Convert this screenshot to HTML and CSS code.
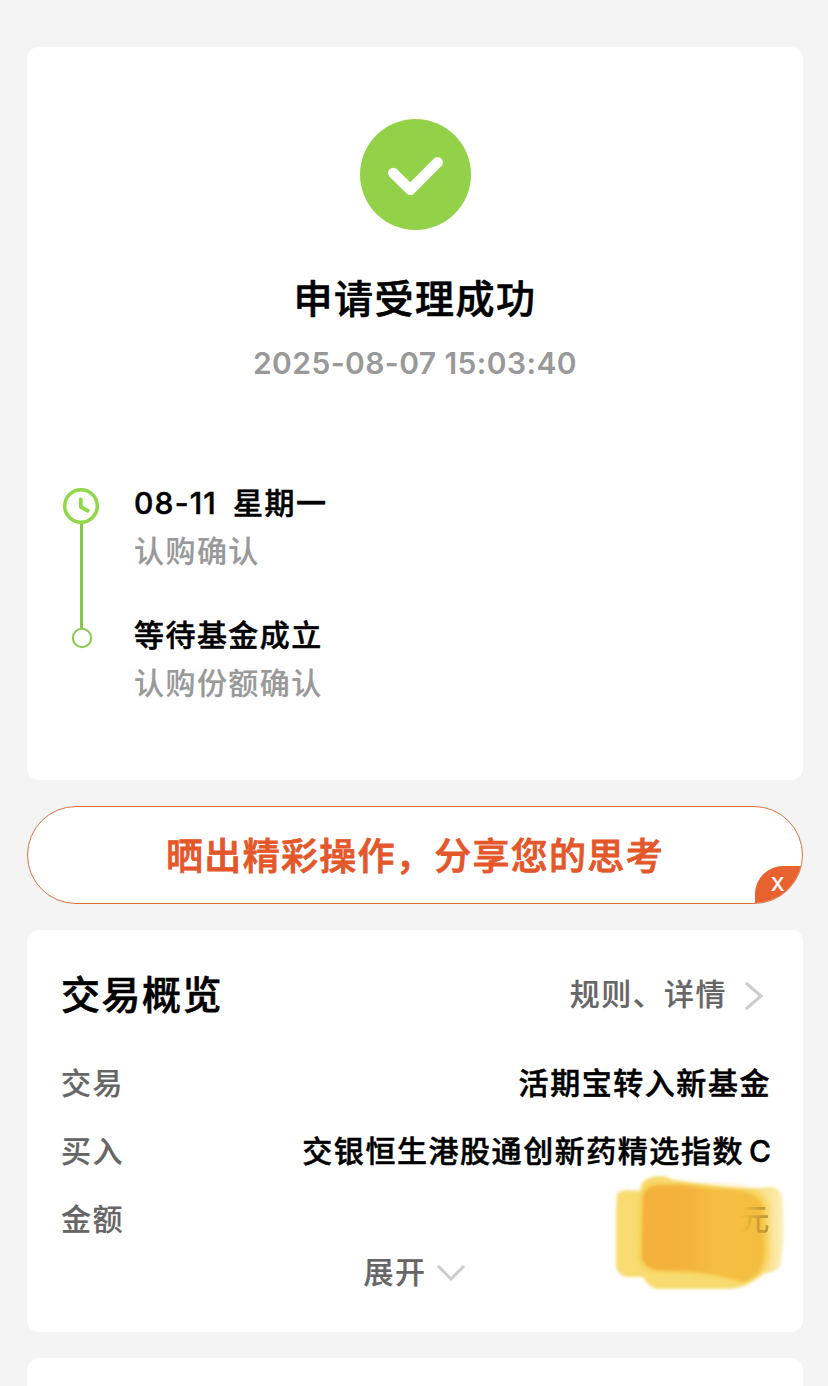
FILE: index.html
```
<!DOCTYPE html>
<html lang="zh-CN">

<head>
    <meta charset="UTF-8">
    <meta name="viewport" content="width=device-width, initial-scale=1.0">
    <title>申请受理成功</title>
    <link rel="stylesheet" href="styles.css">
</head>

<body>
    <div class="page">
        <div class="card result">
            <svg class="result-icon" viewBox="0 0 111 111">
                <circle cx="55.5" cy="55.5" r="55.5" fill="#92d148"/>
                <path d="M33.3 54 L50.3 70.8 L77.7 43.3" fill="none" stroke="#fff" stroke-width="10.5" stroke-linecap="round" stroke-linejoin="round"/>
            </svg>
            <h1 class="result-title">申请受理成功</h1>
            <div class="result-time">2025-08-07 15:03:40</div>

            <div class="timeline">
                <svg class="timeline-line" viewBox="0 0 40 164">
                    <path d="M19.5 36 V142" stroke="#85c550" stroke-width="3"/>
                    <circle cx="19" cy="19" r="16.3" fill="#fff" stroke="#92d64a" stroke-width="3.5"/>
                    <path d="M18.8 12.5 V20 L25.8 23.7" fill="none" stroke="#92d64a" stroke-width="3.8" stroke-linecap="round" stroke-linejoin="round"/>
                    <circle cx="20" cy="151" r="9.2" fill="#fff" stroke="#89ca52" stroke-width="2"/>
                </svg>
                <div class="steps">
                    <div class="step">
                        <div class="step-title"><span class="step-date">08-11</span>星期一</div>
                        <div class="step-desc">认购确认</div>
                    </div>
                    <div class="step">
                        <div class="step-title">等待基金成立</div>
                        <div class="step-desc">认购份额确认</div>
                    </div>
                </div>
            </div>
        </div>

        <div class="share">
            <span class="share-text">晒出精彩操作，分享您的思考</span>
            <span class="share-close">X</span>
        </div>

        <div class="card overview">
            <div class="overview-head">
                <h2 class="overview-title">交易概览</h2>
                <div class="overview-link">
                    <span>规则、详情</span>
                    <svg class="arrow-right" viewBox="0 0 20 30">
                        <path d="M2 2 L17 15 L2 28" fill="none" stroke="#ccc" stroke-width="3"/>
                    </svg>
                </div>
            </div>
            <div class="row">
                <span class="label">交易</span>
                <span class="value">活期宝转入新基金</span>
            </div>
            <div class="row">
                <span class="label">买入</span>
                <span class="value">交银恒生港股通创新药精选指数<span class="share-class">C</span></span>
            </div>
            <div class="row">
                <span class="label">金额</span>
                <span class="value amount">
                    <svg class="marker" viewBox="0 0 180 120">
                        <defs>
                            <filter id="soft" x="-10%" y="-10%" width="120%" height="120%">
                                <feGaussianBlur stdDeviation="1.8"/>
                            </filter>
                            <filter id="softer" x="-15%" y="-15%" width="130%" height="130%">
                                <feGaussianBlur stdDeviation="3"/>
                            </filter>
                            <linearGradient id="ink" x1="0" x2="1" y1="0" y2="0">
                                <stop offset="0" stop-color="#f4b03b"/>
                                <stop offset="0.38" stop-color="#f4b33e"/>
                                <stop offset="0.6" stop-color="#f5bd43"/>
                                <stop offset="1" stop-color="#f3be3f"/>
                            </linearGradient>
                            <linearGradient id="edge" x1="0" x2="1" y1="0" y2="0">
                                <stop offset="0.3" stop-color="#f8dc72"/>
                                <stop offset="0.75" stop-color="#fae394"/>
                                <stop offset="1" stop-color="#fdf0c0"/>
                            </linearGradient>
                        </defs>
                        <path d="M120 18 L166 15 Q176 17 176 32 L177 62 L174 92 Q171 100 160 101 L120 104 Z" fill="url(#edge)" filter="url(#soft)"/>
                        <path d="M10 22 Q14 18 20 18 L34 19 L35 11 Q40 5 52 4 Q60 4 66 8 L100 13 L126 17 L150 60 L156 100 Q140 117 120 117 L50 117 Q41 115 36 105 L20 105 Q10 103 9 94 L9 70 L9 40 Z" fill="#f8dc72" filter="url(#soft)"/>
                        <path d="M33 26 Q36 11 48 11 L80 13 L134 16 Q157 20 160 34 L162 80 Q160 96 152 103 L136 110 Q110 103 80 101 L46 99 Q33 96 32 84 Z" fill="#f6cd50" filter="url(#softer)"/>
                        <path d="M36 26 Q38 14 52 13 L76 13 Q95 17 125 18 Q150 20 155 34 L157 78 Q156 96 148 103 L138 110 Q112 102 84 99 L50 98 Q36 95 35 84 Z" fill="url(#ink)" filter="url(#soft)"/>
                    </svg>
                    <span class="unit">元</span>
                </span>
            </div>
            <div class="expand">
                <span>展开</span>
                <svg class="arrow-down" viewBox="0 0 30 18">
                    <path d="M2 2 L15 15 L28 2" fill="none" stroke="#ccc" stroke-width="3"/>
                </svg>
            </div>
        </div>

        <div class="card next-card"></div>
    </div>
</body>

</html>
```

FILE: styles.css
```
* {
    box-sizing: border-box;
}

body {
    margin: 0;
    height: 1386px;
    overflow: hidden;
    background-color: #f4f4f4;
    font-family: Inter, "Noto Sans CJK SC", sans-serif;
    font-size: 30px;
    font-weight: 500;
    letter-spacing: 1.45px;
    color: #000;
    -webkit-text-stroke: 0.2px currentColor;
}

.page {
    display: flex;
    flex-direction: column;
    gap: 26px;
    padding: 47px 25px 0 27px;
}

.card {
    background-color: #fff;
    border-radius: 12px;
}

.result {
    height: 733px;
    padding: 72px 35px 0;
    display: flex;
    flex-direction: column;
    align-items: center;
}

.result-icon {
    width: 111px;
    height: 111px;
}

.result-title {
    margin: 40px 0 0;
    font-size: 39px;
    font-weight: 500;
    line-height: 58px;
    letter-spacing: 1.5px;
    -webkit-text-stroke-width: 0.6px;
}

.result-time {
    margin-top: 15px;
    line-height: 40px;
    letter-spacing: 0.4px;
    font-weight: 600;
    color: #999;
    -webkit-text-stroke-width: 0;
}

.timeline {
    align-self: stretch;
    display: flex;
    gap: 32px;
    margin-top: 96px;
}

.timeline-line {
    width: 40px;
    height: 164px;
    margin-top: 8px;
}

.steps {
    display: flex;
    flex-direction: column;
    gap: 36px;
}

.step-title,
.step-desc {
    line-height: 48px;
}

.step-title,
.value {
    -webkit-text-stroke-width: 0.5px;
}

.step-desc {
    color: #999;
}

.step-date {
    margin-right: 16px;
    letter-spacing: 1.2px;
}

.share {
    position: relative;
    height: 98px;
    display: flex;
    align-items: center;
    justify-content: center;
    overflow: hidden;
    background-color: #fff;
    border: 1px solid #d9713f;
    border-radius: 49px;
}

.share-text {
    padding-bottom: 3px;
    font-size: 37px;
    font-weight: 500;
    letter-spacing: 1.3px;
    color: #e4572a;
    -webkit-text-stroke-width: 0.8px;
}

.share-close {
    position: absolute;
    right: 0;
    bottom: 0;
    width: 47px;
    height: 37px;
    border-top-left-radius: 28px;
    background-color: #e8622f;
    color: #fff;
    font-size: 19px;
    line-height: 38px;
    text-align: center;
}

.overview {
    height: 402px;
    padding: 31px 32px 0 34px;
}

.overview-head {
    display: flex;
    justify-content: space-between;
    align-items: center;
    height: 62px;
    margin-bottom: 24px;
}

.overview-title {
    margin: 0;
    font-size: 39px;
    font-weight: 500;
    letter-spacing: 1.5px;
    -webkit-text-stroke-width: 0.6px;
}

.overview-link {
    display: flex;
    align-items: center;
    gap: 17px;
    margin-right: 7px;
    color: #666;
}

.arrow-right {
    width: 20px;
    height: 30px;
    margin-top: 7px;
}

.row {
    display: flex;
    justify-content: space-between;
    align-items: center;
    height: 68px;
}

.label {
    color: #666;
}

.value {
    letter-spacing: 1.55px;
}

.share-class {
    margin-left: 5px;
    letter-spacing: 0;
}

.amount {
    position: relative;
}

/* marker stroke that covers the amount */
.marker {
    position: absolute;
    right: -16px;
    top: -23px;
    width: 180px;
    height: 120px;
}

.unit {
    position: relative;
    background-image: linear-gradient(to right, rgba(150, 115, 30, 0.05) 20%, rgba(150, 115, 30, 0.7) 95%);
    background-clip: text;
    -webkit-background-clip: text;
    color: transparent;
    -webkit-text-stroke-width: 0;
}

.expand {
    display: flex;
    align-items: center;
    justify-content: center;
    gap: 10px;
    height: 38px;
    margin-right: 2px;
    color: #666;
}

.arrow-down {
    width: 30px;
    height: 18px;
    margin-top: 5px;
}

.next-card {
    height: 60px;
}
```
